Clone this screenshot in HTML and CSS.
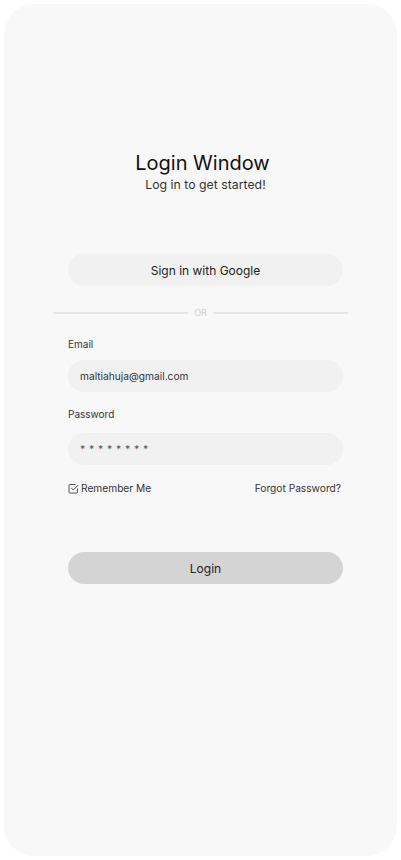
FILE: index.html
```html
<!DOCTYPE html>
<html>
<head>
<meta charset="utf-8">
<link rel="stylesheet" href="styles.css">
</head>
<body>
<div class="card">
  <h1 class="title">Login Window</h1>
  <p class="subtitle">Log in to get started!</p>
  <button class="btn google">Sign in with Google</button>
  <div class="divider"><span class="line"></span><span class="or">OR</span><span class="line"></span></div>
  <label class="label email-label">Email</label>
  <div class="input">maltiahuja@gmail.com</div>
  <label class="label pw-label">Password</label>
  <div class="input pw">* * * * * * * *</div>
  <div class="row">
    <span class="remember"><svg class="check" width="11" height="11" viewBox="0 0 11 11"><path d="M9.5 5.8V9.2a.8.8 0 0 1-.8.8H1.8a.8.8 0 0 1-.8-.8V2.3a.8.8 0 0 1 .8-.8H7" fill="none" stroke="#555" stroke-width="1" stroke-linecap="round"/><path d="M3.5 5.2l1.8 1.8L10 2.3" fill="none" stroke="#555" stroke-width="1" stroke-linecap="round" stroke-linejoin="round"/></svg>Remember Me</span>
    <span class="forgot">Forgot Password?</span>
  </div>
  <button class="btn login">Login</button>
</div>
</body>
</html>
```
FILE: styles.css
```css
* { box-sizing: border-box; }
body {
  margin: 0;
  background: #ffffff;
  font-family: Inter, "Noto Sans", sans-serif;
}
.card {
  margin: 4px;
  width: 393px;
  height: 852px;
  border-radius: 30px;
  background: #f8f8f8;
  display: flex;
  flex-direction: column;
  align-items: center;
  padding-top: 147px;
}
.title {
  margin: 0 0 0 4px;
  font-size: 20px;
  line-height: 24px;
  font-weight: 400;
  color: #111;
}
.subtitle {
  margin: 2px 0 0 10px;
  font-size: 12.3px;
  line-height: 16px;
  color: #333;
}
.btn {
  width: 275px;
  height: 32px;
  margin-left: 10px;
  border: none;
  border-radius: 16px;
  font-family: inherit;
  font-size: 12px;
  color: #222;
  padding: 0;
}
.google {
  margin-top: 61px;
  background: #f1f1f1;
}
.divider {
  margin-top: 21px;
  width: 295px;
  display: flex;
  align-items: center;
  gap: 6px;
  height: 12px;
}
.line {
  flex: 1;
  height: 2px;
  background: #e6e6e6;
}
.or {
  font-size: 9px;
  color: #d0d0d0;
  line-height: 12px;
}
.label {
  align-self: flex-start;
  margin-left: 64px;
  font-size: 10px;
  line-height: 12px;
  color: #333;
}
.email-label { margin-top: 19px; }
.pw-label { margin-top: 16px; }
.input {
  width: 275px;
  height: 32px;
  margin-left: 10px;
  border-radius: 16px;
  background: #f1f1f1;
  padding-left: 12px;
  display: flex;
  align-items: center;
  font-size: 10.2px;
  color: #333;
}
.email-label + .input { margin-top: 10px; }
.pw-label + .input { margin-top: 13px; }
.pw { letter-spacing: 0.4px; color: #555; font-size: 10.5px; }
.row {
  margin-top: 16px;
  margin-left: 10px;
  width: 275px;
  display: flex;
  justify-content: space-between;
  align-items: center;
  font-size: 10.2px;
  line-height: 14px;
  color: #333;
}
.remember { display: flex; align-items: center; gap: 2px; }
.forgot { margin-right: 2px; }
.login {
  margin-top: 57px;
  background: #d4d4d4;
}
```
